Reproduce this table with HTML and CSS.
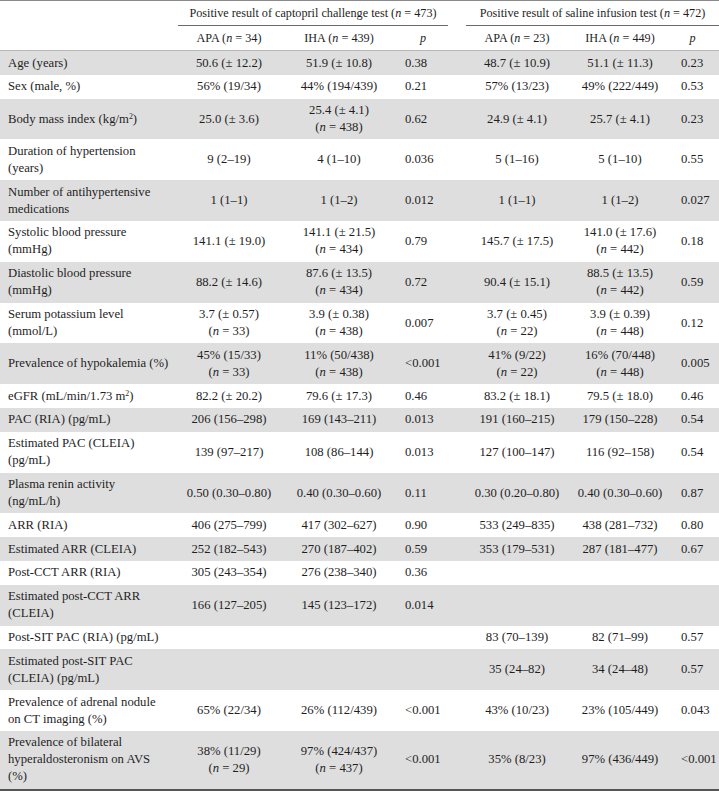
FILE: index.html
```html
<!DOCTYPE html>
<html>
<head>
<meta charset="utf-8">
<link rel="stylesheet" href="styles.css">
</head>
<body>
<table class="tbl">
  <colgroup>
    <col class="c-label"><col class="c-apa1"><col class="c-iha1"><col class="c-p1">
    <col class="c-gap"><col class="c-apa2"><col class="c-iha2"><col class="c-p2">
  </colgroup>
  <thead>
    <tr class="h1">
      <th></th>
      <th colspan="3" class="grp">Positive result of captopril challenge test (<i>n</i> = 473)</th>
      <th></th>
      <th colspan="3" class="grp">Positive result of saline infusion test (<i>n</i> = 472)</th>
    </tr>
    <tr class="h2">
      <th></th>
      <th>APA (<i>n</i> = 34)</th>
      <th>IHA (<i>n</i> = 439)</th>
      <th><i>p</i></th>
      <th></th>
      <th>APA (<i>n</i> = 23)</th>
      <th>IHA (<i>n</i> = 449)</th>
      <th class="hp2"><i>p</i></th>
    </tr>
  </thead>
  <tbody>
    <tr class="g"><td>Age (years)</td><td>50.6 (± 12.2)</td><td>51.9 (± 10.8)</td><td class="p p1">0.38</td><td></td><td>48.7 (± 10.9)</td><td>51.1 (± 11.3)</td><td class="p p2">0.23</td></tr>
    <tr><td>Sex (male, %)</td><td>56% (19/34)</td><td>44% (194/439)</td><td class="p p1">0.21</td><td></td><td>57% (13/23)</td><td>49% (222/449)</td><td class="p p2">0.53</td></tr>
    <tr class="g"><td>Body mass index (kg/m<sup>2</sup>)</td><td>25.0 (± 3.6)</td><td>25.4 (± 4.1)<br>(<i>n</i> = 438)</td><td class="p p1">0.62</td><td></td><td>24.9 (± 4.1)</td><td>25.7 (± 4.1)</td><td class="p p2">0.23</td></tr>
    <tr><td>Duration of hypertension<br>(years)</td><td>9 (2–19)</td><td>4 (1–10)</td><td class="p p1">0.036</td><td></td><td>5 (1–16)</td><td>5 (1–10)</td><td class="p p2">0.55</td></tr>
    <tr class="g"><td>Number of antihypertensive<br>medications</td><td>1 (1–1)</td><td>1 (1–2)</td><td class="p p1">0.012</td><td></td><td>1 (1–1)</td><td>1 (1–2)</td><td class="p p2">0.027</td></tr>
    <tr><td>Systolic blood pressure<br>(mmHg)</td><td>141.1 (± 19.0)</td><td>141.1 (± 21.5)<br>(<i>n</i> = 434)</td><td class="p p1">0.79</td><td></td><td>145.7 (± 17.5)</td><td>141.0 (± 17.6)<br>(<i>n</i> = 442)</td><td class="p p2">0.18</td></tr>
    <tr class="g"><td>Diastolic blood pressure<br>(mmHg)</td><td>88.2 (± 14.6)</td><td>87.6 (± 13.5)<br>(<i>n</i> = 434)</td><td class="p p1">0.72</td><td></td><td>90.4 (± 15.1)</td><td>88.5 (± 13.5)<br>(<i>n</i> = 442)</td><td class="p p2">0.59</td></tr>
    <tr><td>Serum potassium level<br>(mmol/L)</td><td>3.7 (± 0.57)<br>(<i>n</i> = 33)</td><td>3.9 (± 0.38)<br>(<i>n</i> = 438)</td><td class="p p1">0.007</td><td></td><td>3.7 (± 0.45)<br>(<i>n</i> = 22)</td><td>3.9 (± 0.39)<br>(<i>n</i> = 448)</td><td class="p p2">0.12</td></tr>
    <tr class="g"><td>Prevalence of hypokalemia (%)</td><td>45% (15/33)<br>(<i>n</i> = 33)</td><td>11% (50/438)<br>(<i>n</i> = 438)</td><td class="p p1">&lt;0.001</td><td></td><td>41% (9/22)<br>(<i>n</i> = 22)</td><td>16% (70/448)<br>(<i>n</i> = 448)</td><td class="p p2">0.005</td></tr>
    <tr><td>eGFR (mL/min/1.73 m<sup>2</sup>)</td><td>82.2 (± 20.2)</td><td>79.6 (± 17.3)</td><td class="p p1">0.46</td><td></td><td>83.2 (± 18.1)</td><td>79.5 (± 18.0)</td><td class="p p2">0.46</td></tr>
    <tr class="g"><td>PAC (RIA) (pg/mL)</td><td>206 (156–298)</td><td>169 (143–211)</td><td class="p p1">0.013</td><td></td><td>191 (160–215)</td><td>179 (150–228)</td><td class="p p2">0.54</td></tr>
    <tr><td>Estimated PAC (CLEIA)<br>(pg/mL)</td><td>139 (97–217)</td><td>108 (86–144)</td><td class="p p1">0.013</td><td></td><td>127 (100–147)</td><td>116 (92–158)</td><td class="p p2">0.54</td></tr>
    <tr class="g"><td>Plasma renin activity<br>(ng/mL/h)</td><td>0.50 (0.30–0.80)</td><td>0.40 (0.30–0.60)</td><td class="p p1">0.11</td><td></td><td>0.30 (0.20–0.80)</td><td>0.40 (0.30–0.60)</td><td class="p p2">0.87</td></tr>
    <tr><td>ARR (RIA)</td><td>406 (275–799)</td><td>417 (302–627)</td><td class="p p1">0.90</td><td></td><td>533 (249–835)</td><td>438 (281–732)</td><td class="p p2">0.80</td></tr>
    <tr class="g"><td>Estimated ARR (CLEIA)</td><td>252 (182–543)</td><td>270 (187–402)</td><td class="p p1">0.59</td><td></td><td>353 (179–531)</td><td>287 (181–477)</td><td class="p p2">0.67</td></tr>
    <tr><td>Post-CCT ARR (RIA)</td><td>305 (243–354)</td><td>276 (238–340)</td><td class="p p1">0.36</td><td></td><td></td><td></td><td class="p p2"></td></tr>
    <tr class="g"><td>Estimated post-CCT ARR<br>(CLEIA)</td><td>166 (127–205)</td><td>145 (123–172)</td><td class="p p1">0.014</td><td></td><td></td><td></td><td class="p p2"></td></tr>
    <tr><td>Post-SIT PAC (RIA) (pg/mL)</td><td></td><td></td><td class="p p1"></td><td></td><td>83 (70–139)</td><td>82 (71–99)</td><td class="p p2">0.57</td></tr>
    <tr class="g"><td>Estimated post-SIT PAC<br>(CLEIA) (pg/mL)</td><td></td><td></td><td class="p p1"></td><td></td><td>35 (24–82)</td><td>34 (24–48)</td><td class="p p2">0.57</td></tr>
    <tr><td>Prevalence of adrenal nodule<br>on CT imaging (%)</td><td>65% (22/34)</td><td>26% (112/439)</td><td class="p p1">&lt;0.001</td><td></td><td>43% (10/23)</td><td>23% (105/449)</td><td class="p p2">0.043</td></tr>
    <tr class="g last"><td>Prevalence of bilateral<br>hyperaldosteronism on AVS<br>(%)</td><td>38% (11/29)<br>(<i>n</i> = 29)</td><td>97% (424/437)<br>(<i>n</i> = 437)</td><td class="p p1">&lt;0.001</td><td></td><td>35% (8/23)</td><td>97% (436/449)</td><td class="p p2">&lt;0.001</td></tr>
  </tbody>
</table>
</body>
</html>
```

FILE: styles.css
```css
html, body {
  margin: 0;
  padding: 0;
  background: #ffffff;
}

.tbl {
  width: 719px;
  table-layout: fixed;
  border-collapse: collapse;
  font-family: "Liberation Serif", "Times New Roman", serif;
  font-size: 12.7px;
  line-height: 17px;
  color: #1e1e1e;
  border-top: 1px solid #8a8a8a;
  border-bottom: 2px solid #555555;
}

.c-label { width: 178px; }
.c-apa1 { width: 102px; }
.c-iha1 { width: 118px; }
.c-p1 { width: 50px; }
.c-gap { width: 18px; }
.c-apa2 { width: 102px; }
.c-iha2 { width: 104px; }
.c-p2 { width: 47px; }

.tbl th {
  font-weight: normal;
  font-size: 12.2px;
  text-align: center;
  padding: 0;
  white-space: nowrap;
}

.tbl th.hp2 {
  padding-right: 6px;
}

.h1 th {
  height: 24px;
  vertical-align: middle;
}

.h1 th.grp {
  border-bottom: 1px solid #6a6a6a;
}

.h2 th {
  height: 24px;
  vertical-align: middle;
  border-bottom: 1px solid #b8b8b8;
}

.tbl td {
  padding: 3.5px 0 3.3px 0;
  text-align: center;
  vertical-align: middle;
  white-space: nowrap;
}

.tbl td:first-child {
  text-align: left;
  padding-left: 8px;
}

.tbl td.p {
  text-align: left;
}

.tbl td.p1 { padding-left: 7px; }
.tbl td.p2 { padding-left: 9px; }

.g td {
  background: #dedede;
}

sup {
  font-size: 0.62em;
  line-height: 0;
  vertical-align: 0.55em;
}
```
